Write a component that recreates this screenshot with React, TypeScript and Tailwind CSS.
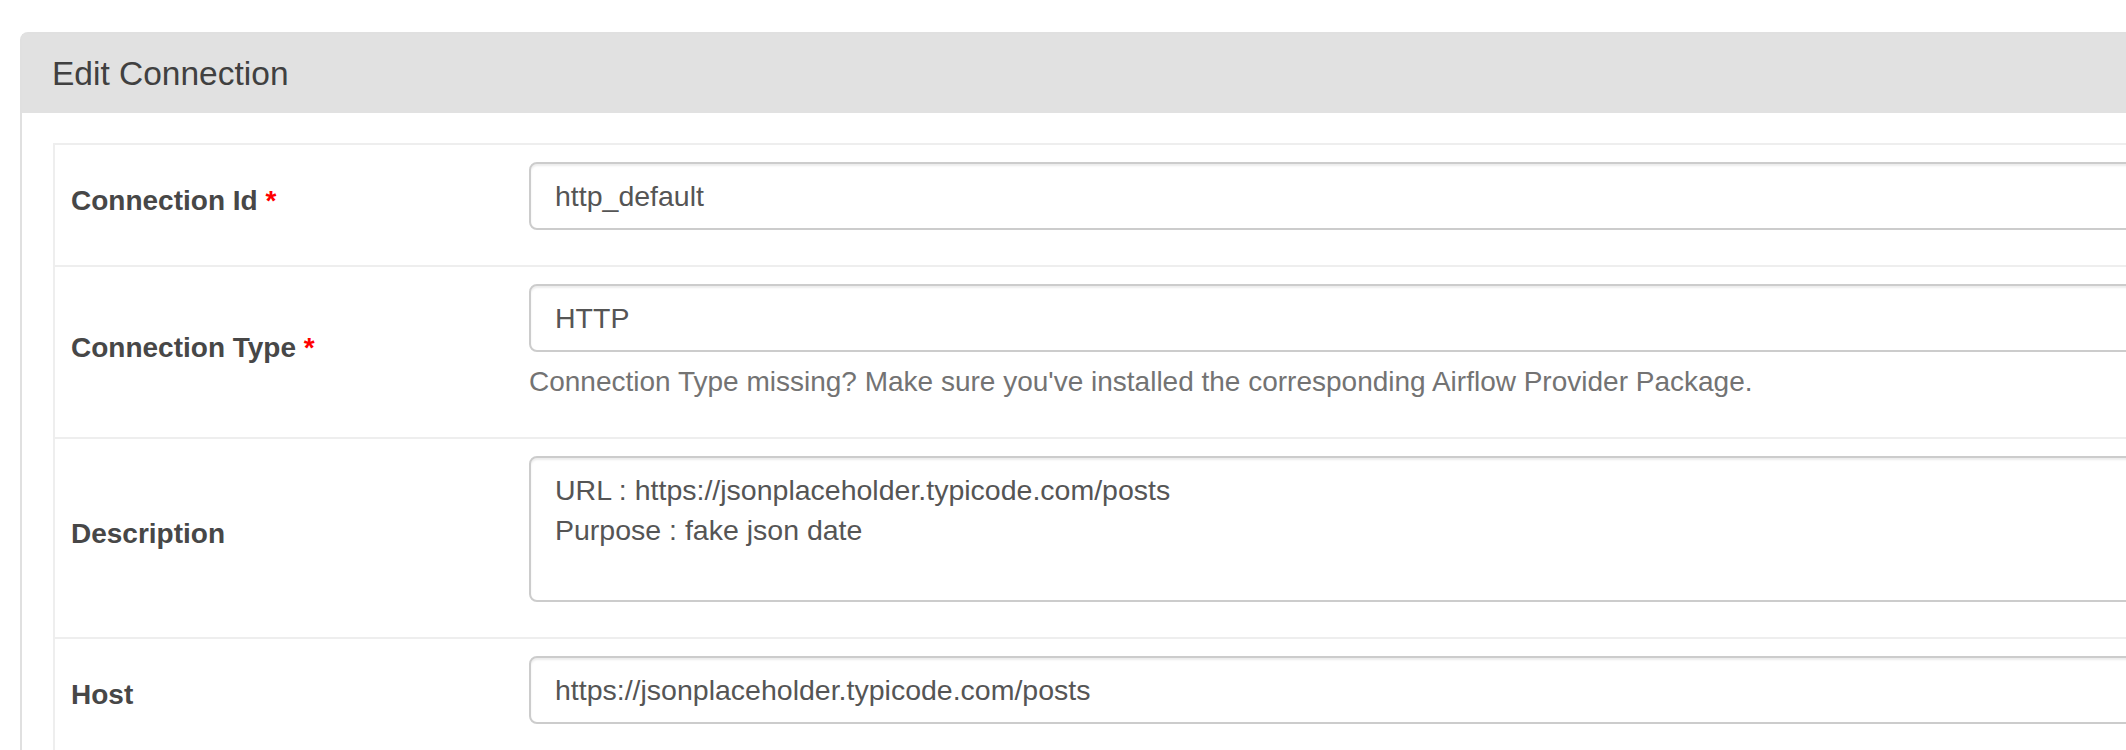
import { ReactElement } from "react";

const font = { fontFamily: '"Liberation Sans", Arial, Helvetica, sans-serif' };

function Label({ text, required }: { text: string; required?: boolean }): ReactElement {
  return (
    <div className="w-[458px] shrink-0 pl-4 pb-2 flex items-center">
      <span className="text-[28px] font-bold text-[#474747] leading-[40px]">
        {text}
        {required && <span className="text-[#ff0000]"> *</span>}
      </span>
    </div>
  );
}

function Field({ value }: { value: string }): ReactElement {
  return (
    <input
      readOnly
      value={value}
      className="w-full h-[68px] border-2 border-[#ccc] rounded-lg px-6 text-[28.5px] text-[#555] bg-white outline-none shadow-[inset_0_2px_2px_rgba(0,0,0,0.075)]"
    />
  );
}

function App(): ReactElement {
  return (
    <div className="w-full h-[750px] overflow-hidden bg-white" style={font}>
      <div className="pl-5 pt-8">
        {/* Panel */}
        <div className="w-[2200px] border-2 border-[#e0e0e0] rounded-t-lg">
          {/* Heading */}
          <div className="h-[79px] bg-[#e1e1e1] px-[30px] flex items-center">
            <h3 className="text-[33.5px] text-[#404040] leading-none">Edit Connection</h3>
          </div>
          {/* Body */}
          <div className="pl-[31px] pt-[30px]">
            <div className="border-l-2 border-t-2 border-[#eeeeee]">
              <div className="flex border-b-2 border-[#eeeeee]">
                <Label text="Connection Id" required />
                <div className="flex-1 pl-4 pt-[17px] pb-[35px]">
                  <Field value="http_default" />
                </div>
              </div>
              <div className="flex border-b-2 border-[#eeeeee]">
                <Label text="Connection Type" required />
                <div className="flex-1 pl-4 pt-[17px] pb-[35px]">
                  <Field value="HTTP" />
                  <p className="mt-[10px] text-[28px] leading-[40px] text-[#737373]">
                    Connection Type missing? Make sure you've installed the corresponding Airflow Provider Package.
                  </p>
                </div>
              </div>
              <div className="flex border-b-2 border-[#eeeeee]">
                <Label text="Description" />
                <div className="flex-1 pl-4 pt-[17px] pb-[35px]">
                  <textarea
                    readOnly
                    rows={3}
                    value={"URL : https://jsonplaceholder.typicode.com/posts\nPurpose : fake json date"}
                    className="block w-full h-[146px] resize-none border-2 border-[#ccc] rounded-lg px-6 py-3 text-[28.5px] leading-[40px] text-[#555] bg-white outline-none overflow-hidden shadow-[inset_0_2px_2px_rgba(0,0,0,0.075)]"
                  />
                </div>
              </div>
              <div className="flex border-b-2 border-[#eeeeee]">
                <Label text="Host" />
                <div className="flex-1 pl-4 pt-[17px] pb-[35px]">
                  <Field value="https://jsonplaceholder.typicode.com/posts" />
                </div>
              </div>
            </div>
          </div>
        </div>
      </div>
    </div>
  );
}

export default App;
